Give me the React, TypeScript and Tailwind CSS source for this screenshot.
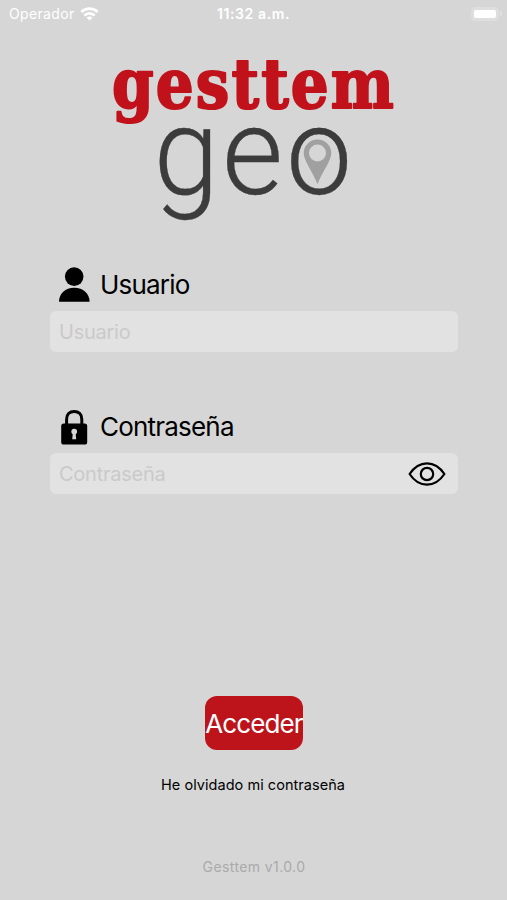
import * as React from "react"

interface FieldProps {
  label: string
  icon: React.ReactNode
  type?: string
  trailing?: React.ReactNode
}

function UserIcon() {
  return (
    <svg className="h-[36px] w-[33px]" viewBox="0 0 33 36" fill="#000">
      <circle cx="16.2" cy="9.6" r="9.3" />
      <path d="M1 34.7C1 26.8 7.2 20.8 16.2 20.8S31.6 26.8 31.6 34.7Z" />
    </svg>
  )
}

function LockIcon() {
  return (
    <svg className="h-[36px] w-[33px]" viewBox="0 0 33 36">
      <path
        d="M8.6 16V10.2C8.6 5.2 11.8 2.4 16.2 2.4S23.8 5.2 23.8 10.2V16"
        fill="none"
        stroke="#000"
        strokeWidth="3"
      />
      <rect x="3.2" y="14.5" width="26" height="21" rx="2.6" fill="#000" />
      <path
        d="M16.2 19.8a2.9 2.9 0 0 1 2.9 2.9c0 1.1-.6 2-1.4 2.5l.5 5h-4l.5-5a2.9 2.9 0 0 1-1.4-2.5 2.9 2.9 0 0 1 2.9-2.9Z"
        fill="#d6d6d6"
      />
    </svg>
  )
}

function EyeIcon() {
  return (
    <svg
      className="h-[24px] w-[38px]"
      viewBox="0 0 38 24"
      fill="none"
      stroke="#000"
      strokeWidth="2.2"
      strokeLinejoin="round"
    >
      <path d="M1.6 12C6.5 4.6 12.5 1.3 19 1.3S31.5 4.6 36.4 12C31.5 19.4 25.5 22.7 19 22.7S6.5 19.4 1.6 12Z" />
      <circle cx="19" cy="12" r="6.2" />
    </svg>
  )
}

function WifiIcon() {
  return (
    <svg className="h-[14px] w-[19px]" viewBox="0 0 19 14" fill="none" stroke="#fff" strokeWidth="2.7">
      <path d="M1.3 5C6 .5 13 .5 17.7 5" />
      <path d="M4.3 8.6C7.2 5.7 11.8 5.7 14.7 8.6" />
      <path d="M9.5 13.5 6.6 10.7C8.2 9.2 10.8 9.2 12.4 10.7Z" fill="#fff" stroke="none" />
    </svg>
  )
}

function StatusBar() {
  return (
    <div className="grid h-[28px] grid-cols-3 items-center text-white">
      <div className="flex items-center gap-[5px] pl-[9px]">
        <span className="text-[14px] leading-[18px] tracking-[0.35px]">Operador</span>
        <WifiIcon />
      </div>
      <span className="text-center text-[14px] leading-[18px] font-semibold tracking-[0.6px] whitespace-nowrap">
        11:32 a.m.
      </span>
      <div className="flex items-center justify-end gap-px pr-[5px] pb-px">
        <div className="h-[14px] w-[28px] rounded-[4px] border border-[#dedede] bg-[#dedede] p-[2px]">
          <div className="h-full rounded-[2px] bg-white" />
        </div>
        <div className="h-[5px] w-[2px] rounded-r-full bg-[#e0e0e0]" />
      </div>
    </div>
  )
}

function Logo() {
  return (
    <svg
      className="mx-auto h-[180px] w-[310px] overflow-visible"
      viewBox="0 0 310 180"
      role="img"
      aria-label="gesttem geo"
    >
      <text
        x="13"
        y="58"
        fill="#c1121c"
        stroke="#c1121c"
        strokeWidth="2.2"
        strokeLinejoin="round"
        fontFamily="'DejaVu Serif', serif"
        fontWeight="700"
        fontSize="70"
        letterSpacing="2.5"
        textLength="284"
        lengthAdjust="spacingAndGlyphs"
      >
        gesttem
      </text>
      <text
        x="54.5"
        y="144"
        fill="#3c3c3c"
        stroke="#3c3c3c"
        strokeWidth="0.3"
        fontFamily="Roboto, sans-serif"
        fontWeight="300"
        fontSize="122"
        letterSpacing="3"
        textLength="201.5"
        lengthAdjust="spacingAndGlyphs"
      >
        geo
      </text>
      <path
        d="M218.5 89.5a13.8 13.8 0 0 1 13.8 13.8c0 7-8.5 18-13.8 30.7-5.3-12.7-13.8-23.7-13.8-30.7a13.8 13.8 0 0 1 13.8-13.8Zm0 5a8.5 8.5 0 1 0 0 17 8.5 8.5 0 0 0 0-17Z"
        fill="#a0a0a0"
        fillRule="evenodd"
      />
    </svg>
  )
}

function Field({ label, icon, type = "text", trailing }: FieldProps) {
  return (
    <label className="block">
      <span className="flex h-[36px] items-center gap-[9px] pl-[8px]">
        {icon}
        <span className="text-[26px] leading-[36px] tracking-[-0.8px]">{label}</span>
      </span>
      <span className="mt-[8px] flex h-[41px] items-center rounded-[6px] bg-[#e2e2e2] pr-[12px] pl-[9px]">
        <input
          type={type}
          placeholder={label}
          className="w-full min-w-0 flex-1 bg-transparent text-[20px] tracking-[-0.25px] outline-none placeholder:text-[#cacaca]"
        />
        {trailing}
      </span>
    </label>
  )
}

export default function App() {
  const [visible, setVisible] = React.useState(false)

  return (
    <main className="flex h-[900px] w-full flex-col overflow-hidden bg-[#d6d6d6] font-['Inter',sans-serif] text-black">
      <StatusBar />
      <div className="mt-[22px]">
        <Logo />
      </div>
      <form className="mt-[37px] flex flex-1 flex-col pr-[49px] pl-[50px]" onSubmit={(e) => e.preventDefault()}>
        <div className="space-y-[57px]">
          <Field label="Usuario" icon={<UserIcon />} />
          <Field
            label="Contraseña"
            icon={<LockIcon />}
            type={visible ? "text" : "password"}
            trailing={
              <button type="button" aria-label="Mostrar contraseña" onClick={() => setVisible(!visible)}>
                <EyeIcon />
              </button>
            }
          />
        </div>
        <div className="mt-[202px] flex flex-col items-center">
          <button
            type="submit"
            className="flex h-[54px] w-[98px] items-center justify-center rounded-[12px] bg-[#bd141b] pt-px text-[26px] tracking-[-0.9px] text-white"
          >
            Acceder
          </button>
          <a className="mt-[25px] pr-[2px] text-[14.5px] leading-[20px] tracking-[0.04px]">He olvidado mi contraseña</a>
          <p className="mt-[62px] text-[14px] leading-[20px] tracking-[0.4px] text-[#aaa]">Gesttem v1.0.0</p>
        </div>
      </form>
    </main>
  )
}
